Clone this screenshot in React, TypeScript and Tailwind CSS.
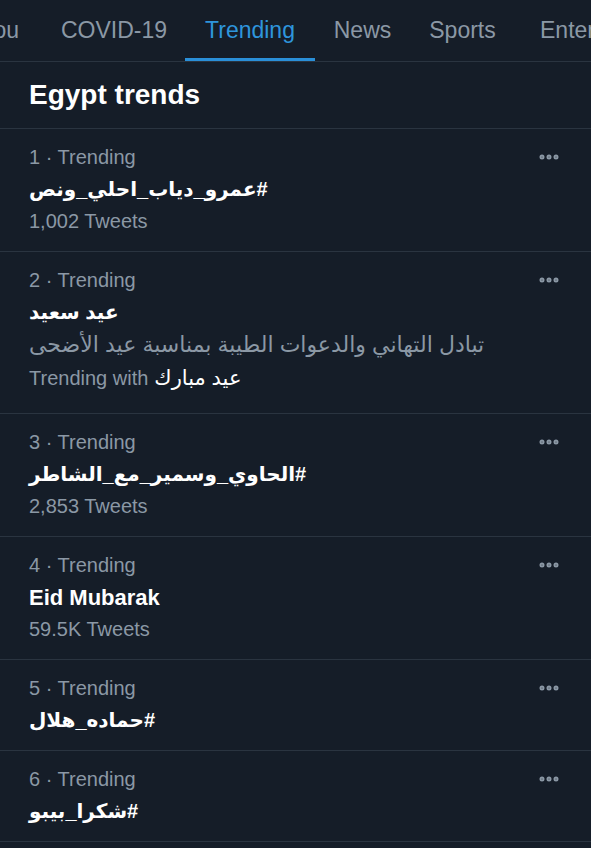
import { MoreHorizontal } from 'lucide-react';

type Trend = {
  rank: number;
  title: string;
  rtl?: boolean;
  tweets?: string;
  description?: string;
  trendingWith?: string;
};

const trends: Trend[] = [
  { rank: 1, title: '#عمرو_دياب_احلي_ونص', rtl: true, tweets: '1,002 Tweets' },
  {
    rank: 2,
    title: 'عيد سعيد',
    rtl: true,
    description: 'تبادل التهاني والدعوات الطيبة بمناسبة عيد الأضحى',
    trendingWith: 'عيد مبارك',
  },
  { rank: 3, title: '#الحاوي_وسمير_مع_الشاطر', rtl: true, tweets: '2,853 Tweets' },
  { rank: 4, title: 'Eid Mubarak', tweets: '59.5K Tweets' },
  { rank: 5, title: '#حماده_هلال', rtl: true },
  { rank: 6, title: '#شكرا_بيبو', rtl: true },
];

function Tabs() {
  return (
    <div className="flex h-[62px] border-b border-[#2a3440] overflow-hidden text-[23px] text-[#8b98a5]">
      <div className="flex w-[43px] shrink-0 justify-end items-center pr-[24px] whitespace-nowrap">For you</div>
      <div className="flex w-[142px] shrink-0 justify-center items-center">COVID-19</div>
      <div className="relative flex w-[130px] shrink-0 justify-center items-center text-[#2e95dc]">
        Trending
        <div className="absolute left-0 right-0 bottom-[-1px] h-[4px] bg-[#2a8fd8]" />
      </div>
      <div className="flex w-[95px] shrink-0 justify-center items-center">News</div>
      <div className="flex w-[105px] shrink-0 justify-center items-center">Sports</div>
      <div className="flex shrink-0 items-center pl-[25px] whitespace-nowrap">Entertainment</div>
    </div>
  );
}

function TrendRow({ trend }: { trend: Trend }) {
  return (
    <div className="flex border-b border-[#2a3440] pl-[29px] pr-[30px] pt-[12px] pb-[14px]">
      <div className="flex-1 min-w-0">
        <div className="h-[32px] flex items-center text-[20px] text-[#8b98a5]">{trend.rank} · Trending</div>
        {trend.rtl ? (
          <div dir="rtl" className="h-[32px] flex items-center justify-end text-[20px] font-bold text-white">
            {trend.title}
          </div>
        ) : (
          <div className="h-[32px] flex items-center text-[22px] font-bold text-white">{trend.title}</div>
        )}
        {trend.description && (
          <div dir="rtl" className="h-[33px] flex items-center justify-end text-[22px] text-[#8b98a5]">
            {trend.description}
          </div>
        )}
        {trend.trendingWith && (
          <div className="h-[33px] mb-[5px] flex items-center gap-[6px] text-[20px] text-[#8b98a5]">
            Trending with <span className="text-white text-[21px]">{trend.trendingWith}</span>
          </div>
        )}
        {trend.tweets && (
          <div className="h-[32px] flex items-center text-[20px] text-[#8b98a5]">{trend.tweets}</div>
        )}
      </div>
      <div className="h-[32px] flex items-center">
        <MoreHorizontal className="h-[24px] w-[24px] text-[#8b98a5]" strokeWidth={3} />
      </div>
    </div>
  );
}

export default function App() {
  return (
    <div
      className="min-h-[848px] w-[591px] bg-[#151d28] overflow-hidden"
      style={{ fontFamily: '"Liberation Sans", "DejaVu Sans", sans-serif' }}
    >
      <Tabs />
      <div className="h-[67px] flex items-center border-b border-[#2a3440] pl-[29px] text-[28px] font-bold text-white">
        Egypt trends
      </div>
      {trends.map((t) => (
        <TrendRow key={t.rank} trend={t} />
      ))}
    </div>
  );
}
